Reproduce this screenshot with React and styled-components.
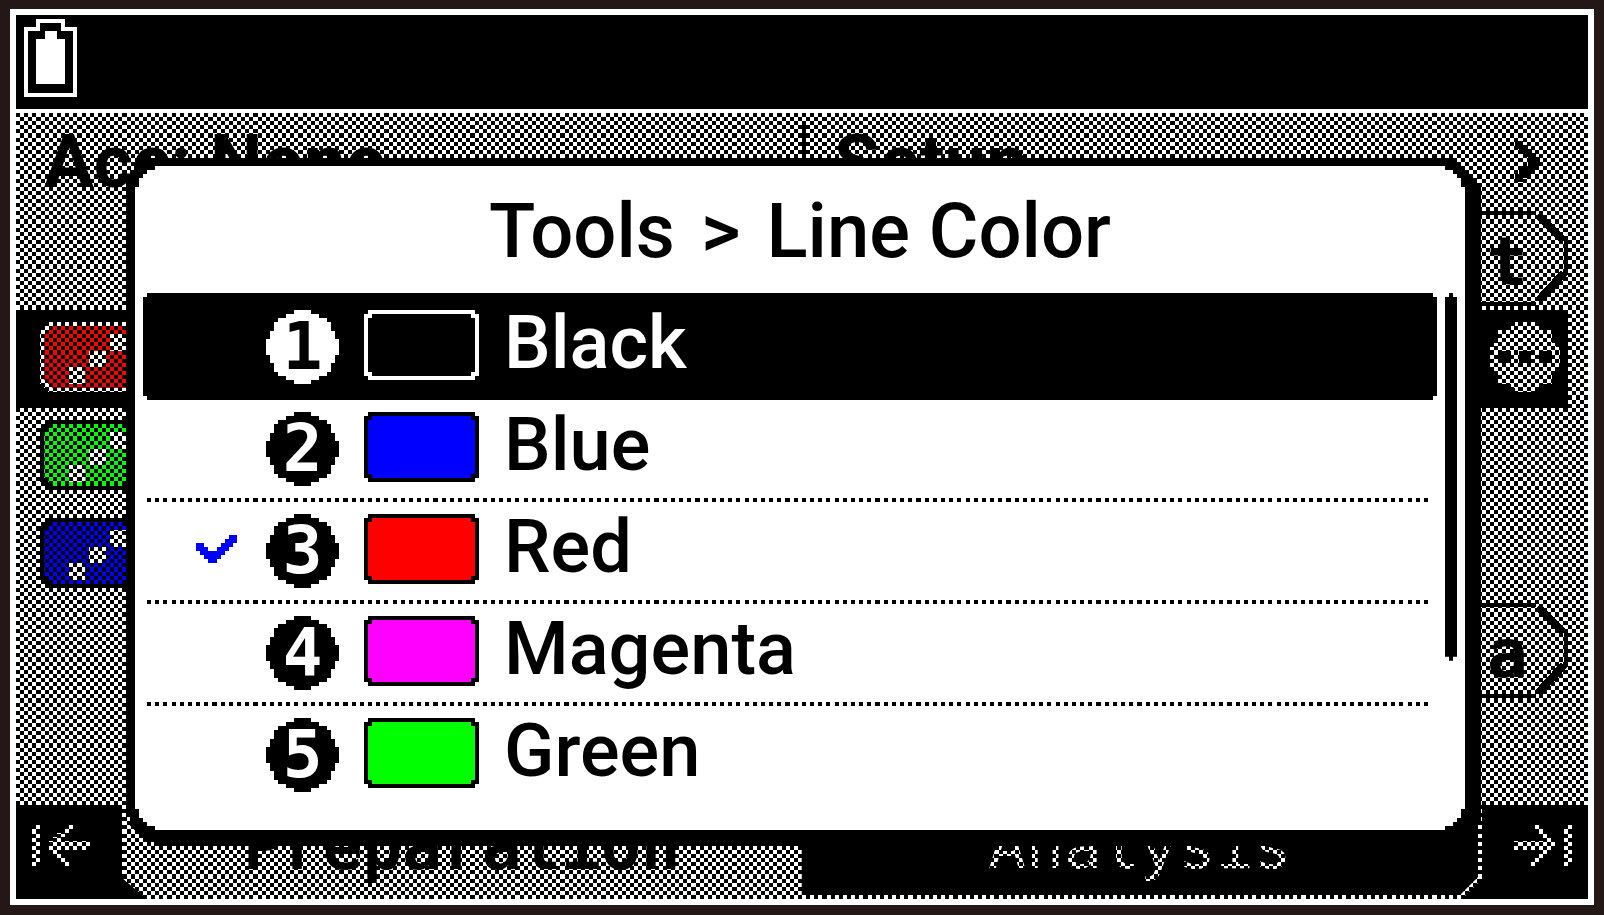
import React, { useState } from "react";
import styled, { createGlobalStyle } from "styled-components";

const GlobalStyle = createGlobalStyle`
  * { box-sizing: border-box; }
  body { margin: 0; background: #231815; }
  button { margin: 0; padding: 0; border: 0; background: none; color: inherit; font: inherit; text-align: left; cursor: pointer; }
  svg { display: block; shape-rendering: crispEdges; }
`;

/* Outline of a box whose corners are cut in square steps of one LCD pixel. */
const steppedCorners = (steps) => {
  const tl = steps.map(([x, y]) => `${x}px ${y}px`);
  const tr = [...steps].reverse().map(([x, y]) => `calc(100% - ${x}px) ${y}px`);
  const br = steps.map(([x, y]) => `calc(100% - ${x}px) calc(100% - ${y}px)`);
  const bl = [...steps].reverse().map(([x, y]) => `${x}px calc(100% - ${y}px)`);
  return `polygon(${[...tl, ...tr, ...br, ...bl].join(", ")})`;
};
const SMALL_NOTCH = steppedCorners([[0, 4], [4, 4], [4, 0]]);
const LARGE_NOTCH = steppedCorners([
  [0, 21], [4, 21], [4, 12], [8, 12], [8, 8], [12, 8], [12, 4], [20, 4], [20, 0],
]);

const Bezel = styled.main`
  min-height: 100vh;
  padding: 9px 10px 10px;
  background: #231815;
  color: #000;
  display: flex;
  font-family: Roboto, "Liberation Sans", sans-serif;
`;

const Screen = styled.div`
  flex: 1;
  min-width: 0;
  border: 6px solid #fff;
  display: flex;
  flex-direction: column;
`;

const StatusBar = styled.header`
  height: 98px;
  padding: 4px 8px;
  background: #000;
  border-bottom: 4px solid #fff;
`;

const Workspace = styled.div`
  flex: 1;
  display: grid;
  grid-template-columns: minmax(0, 1fr);
  position: relative;
  background: #fff;
`;

const Backdrop = styled.div`
  grid-area: 1 / 1;
  display: flex;
  flex-direction: column;
  font-family: "DejaVu Sans Mono", "Liberation Mono", monospace;
  font-size: 68px;
  font-weight: 700;
`;

const TopMenu = styled.nav`
  height: 99px;
  display: grid;
  grid-template-columns: 1fr 1fr;
  padding-top: 8px;
  font-family: Roboto, "Liberation Sans", sans-serif;
  font-size: 74px;
`;

const TopItem = styled.button`
  display: flex;
  align-items: center;
  justify-content: space-between;
  padding: 0 48px 10px 28px;
  line-height: 80px;
  border-left: ${(p) => (p.$divided ? "4px solid #000" : "0")};
`;

const ToolRow = styled.div`
  height: 98px;
  margin-right: 20px;
  padding: 0 0 4px 24px;
  display: flex;
  align-items: center;
  justify-content: space-between;
  background: ${(p) => (p.$active ? "#000" : "transparent")};
`;

const SwatchSvg = styled.svg`
  width: 115px;
  height: 70px;
`;

const RoundButton = styled.button`
  margin-right: 8px;
`;

const KeyHint = styled.button`
  width: 110px;
  height: 96px;
  margin-left: auto;
  padding: 6px 40px 0 0;
  position: relative;
  line-height: 90px;
  text-align: right;

  svg { position: absolute; inset: 0; }
`;

const Footer = styled.footer`
  height: 94px;
  margin-top: auto;
  display: flex;
  background: #000;
`;

const EndButton = styled.button`
  flex: none;
  width: 106px;
  display: flex;
  align-items: center;
  justify-content: ${(p) => (p.$end ? "flex-end" : "flex-start")};
  padding: 0 16px 13px;
`;

const Tab = styled.button`
  flex: 1 1 50%;
  padding: ${(p) => (p.$selected ? "0" : "0 4px 4px 0")};
  background: #fff;
  text-align: center;
  clip-path: ${(p) =>
    p.$selected
      ? "polygon(0 0, 100% 0, 100% 100%, 25px 100%, 0 73px)"
      : "polygon(0 0, 100% 0, 100% calc(100% - 20px), calc(100% - 20px) 100%, 0 100%)"};
`;

const TabLabel = styled.span`
  display: block;
  height: 100%;
  font-size: ${(p) => (p.$selected ? "66px" : "63px")};
  font-weight: ${(p) => (p.$selected ? 700 : 400)};
  line-height: 84px;
  background: ${(p) => (p.$selected ? "#fff" : "#000")};
  color: ${(p) => (p.$selected ? "#000" : "#fff")};
  clip-path: ${(p) =>
    p.$selected
      ? "none"
      : "polygon(0 0, 100% 0, 100% calc(100% - 18px), calc(100% - 18px) 100%, 0 100%)"};
`;

const DitherSvg = styled.svg`
  position: absolute;
  inset: 0;
  width: 100%;
  height: 100%;
  pointer-events: none;
`;

const DialogShadow = styled.div`
  grid-area: 1 / 1;
  align-self: start;
  position: relative;
  margin: 45px 115px 61px 110px;
  filter: drop-shadow(8px 8px 0 #000);
`;

const DialogFrame = styled.section`
  padding: 8px 8px 8px 9px;
  background: #000;
  clip-path: ${LARGE_NOTCH};
`;

const DialogBody = styled.div`
  padding-bottom: 22px;
  background: #fff;
  clip-path: ${LARGE_NOTCH};
`;

const Title = styled.h1`
  margin: 0;
  height: 127px;
  display: flex;
  justify-content: center;
  gap: 26px;
  font-size: 76px;
  font-weight: 500;
  line-height: 130px;
  white-space: nowrap;
`;

const ListArea = styled.div`
  display: grid;
  grid-template-columns: minmax(0, 1fr) 12px;
  gap: 8px;
  padding: 0 8px;
`;

const ColorRow = styled.button`
  display: flex;
  flex-direction: column;
  justify-content: flex-start;
  align-items: stretch;
  width: 100%;
  height: ${(p) => (p.$focused ? "107px" : "102px")};
  padding-top: ${(p) => (p.$focused ? "5px" : "0")};
  background: ${(p) => (p.$focused ? "#000" : "#fff")};
  color: ${(p) => (p.$focused ? "#fff" : "#000")};
  clip-path: ${(p) => (p.$focused ? SMALL_NOTCH : "none")};
`;

const RowGrid = styled.span`
  display: grid;
  grid-template-columns: 45px 73px 115px 1fr;
  column-gap: 25px;
  align-items: start;
  height: 98px;
  padding: 12px 0 0 53px;
`;

const CheckSlot = styled.span`
  padding-top: 21px;
`;

const Badge = styled.span`
  display: grid;
  height: 74px;

  > * { grid-area: 1 / 1; }
`;

const Digit = styled.span`
  color: ${(p) => (p.$focused ? "#000" : "#fff")};
  font: 700 66px/74px "DejaVu Sans Mono", "Liberation Mono", monospace;
  text-align: center;
`;

const ColorName = styled.span`
  font-size: 74px;
  font-weight: 500;
  line-height: 66px;
`;

const RuleSvg = styled.svg`
  width: calc(100% - 13px);
  height: 4px;
  margin-left: 4px;
`;

const Scrollbar = styled.div`
  background: #fff;
`;

const Thumb = styled.div`
  height: calc(100% * 5 / 7);
  background: #000;
  clip-path: ${SMALL_NOTCH};
`;

const Dither = () => (
  <DitherSvg viewBox="0 0 384 192" preserveAspectRatio="none" aria-hidden="true">
    <g stroke="#000" strokeWidth="1" strokeDasharray="1 1">
      {Array.from({ length: 192 }, (_, y) => (
        <line key={y} x1={y % 2} x2="384" y1={y + 0.5} y2={y + 0.5} />
      ))}
    </g>
  </DitherSvg>
);

const Battery = () => (
  <svg width="53" height="78" viewBox="0 0 53 78" fill="#fff" role="img" aria-label="Battery full">
    <path fillRule="evenodd" d="M12 0H41V8H53V78H0V8H12ZM16 4H37V12H49V74H4V12H16Z" />
    <path d="M21 12H33V20H41V65H12V20H21Z" />
  </svg>
);

const Swatch = ({ fill, line = "#000" }) => (
  <SwatchSvg viewBox="0 0 28 17" preserveAspectRatio="none" aria-hidden="true">
    <path fill={line} d="M1 0H27V1H28V16H27V17H1V16H0V1H1Z" />
    <path fill={fill} d="M2 1H26V2H27V15H26V16H2V15H1V2H2Z" />
  </SwatchSvg>
);

const SeriesSwatch = ({ fill, line = "#000" }) => (
  <SwatchSvg viewBox="0 0 28 17" preserveAspectRatio="none" aria-hidden="true">
    <path fill={line} d="M2 0H26V1H27V2H28V15H27V16H26V17H2V16H1V15H0V2H1V1H2Z" />
    <path fill={fill} d="M3 1H25V2H26V3H27V14H26V15H25V16H3V15H2V14H1V3H2V2H3Z" />
    <path fill="#fff" d="M7 11H11V15H7ZM12 7H16V11H12ZM17 3H21V7H17Z" />
  </SwatchSvg>
);

const Disc = ({ fill }) => (
  <svg width="73" height="74" viewBox="0 0 18 18" preserveAspectRatio="none" fill={fill} aria-hidden="true">
    <path d="M7 0H11V1H13V2H15V3H16V5H17V7H18V11H17V13H16V15H15V16H13V17H11V18H7V17H5V16H3V15H2V13H1V11H0V7H1V5H2V3H3V2H5V1H7Z" />
  </svg>
);

const Check = () => (
  <svg width="41" height="28" viewBox="0 0 10 7" preserveAspectRatio="none" fill="#00f" role="img" aria-label="Chosen">
    <path d="M8 0H10V2H9V3H8V4H7V5H6V6H5V7H3V6H2V5H1V4H0V2H2V3H3V4H5V3H6V2H7V1H8Z" />
  </svg>
);

const Chevron = () => (
  <svg width="25" height="41" viewBox="0 0 6 10" preserveAspectRatio="none" aria-hidden="true">
    <path d="M0 0H2V1H3V2H4V3H5V4H6V6H5V7H4V8H3V9H2V10H0V8H1V7H2V6H3V4H2V3H1V2H0Z" />
  </svg>
);

const KeyOutline = () => (
  <svg width="110" height="96" viewBox="0 0 110 96" fill="none" stroke="#000" aria-hidden="true">
    <path strokeWidth="4" d="M0 2H78M108 28V64M0 93H78" />
    <path strokeWidth="8" d="M80 4L106 30M106 62L80 90" />
  </svg>
);

const MoreIcon = () => (
  <svg width="70" height="70" viewBox="0 0 17 17" aria-hidden="true">
    <path
      fill="#fff"
      d="M6 0H11V1H12V2H15V5H16V6H17V11H16V12H15V15H12V16H11V17H6V16H5V15H2V12H1V11H0V6H1V5H2V2H5V1H6Z"
    />
    <path d="M2 7H5V10H2ZM7 7H10V10H7ZM12 7H15V10H12Z" />
  </svg>
);

const ToStart = () => (
  <svg width="58" height="41" viewBox="0 0 14 10" preserveAspectRatio="none" fill="#fff" aria-hidden="true">
    <path d="M0 0H2V10H0ZM8 0H10V1H9V2H8V3H7V4H14V6H7V7H8V8H9V9H10V10H8V9H7V8H6V7H5V6H4V4H5V3H6V2H7V1H8Z" />
  </svg>
);

const ToEnd = () => (
  <svg width="58" height="41" viewBox="0 0 14 10" preserveAspectRatio="none" fill="#fff" aria-hidden="true">
    <path d="M12 0H14V10H12ZM4 0H6V1H7V2H8V3H9V4H10V6H9V7H8V8H7V9H6V10H4V9H5V8H6V7H7V6H0V4H7V3H6V2H5V1H4Z" />
  </svg>
);

const DottedRule = () => (
  <RuleSvg viewBox="0 0 313 1" preserveAspectRatio="none" aria-hidden="true">
    <line x1="0" x2="313" y1="0.5" y2="0.5" stroke="#000" strokeDasharray="1 1" />
  </RuleSvg>
);

const COLORS = [
  { name: "Black", value: "#000" },
  { name: "Blue", value: "#00f" },
  { name: "Red", value: "#f00" },
  { name: "Magenta", value: "#f0f" },
  { name: "Green", value: "#0f0" },
];

export default function App() {
  const [focused, setFocused] = useState(0);
  const [chosen, setChosen] = useState(2);

  return (
    <Bezel>
      <GlobalStyle />
      <Screen>
        <StatusBar>
          <Battery />
        </StatusBar>
        <Workspace>
          <Backdrop>
            <TopMenu>
              <TopItem>Acc: None</TopItem>
              <TopItem $divided>
                Setup
                <Chevron />
              </TopItem>
            </TopMenu>
            <ToolRow>
              <KeyHint>
                <KeyOutline />t
              </KeyHint>
            </ToolRow>
            <ToolRow $active>
              <SeriesSwatch fill="#f00" line="#fff" />
              <RoundButton aria-label="More">
                <MoreIcon />
              </RoundButton>
            </ToolRow>
            <ToolRow>
              <SeriesSwatch fill="#0f0" />
            </ToolRow>
            <ToolRow>
              <SeriesSwatch fill="#00f" />
            </ToolRow>
            <ToolRow>
              <KeyHint>
                <KeyOutline />a
              </KeyHint>
            </ToolRow>
            <Footer>
              <EndButton aria-label="First tab">
                <ToStart />
              </EndButton>
              <Tab $selected>
                <TabLabel $selected>Preparation</TabLabel>
              </Tab>
              <Tab>
                <TabLabel>Analysis</TabLabel>
              </Tab>
              <EndButton $end aria-label="Last tab">
                <ToEnd />
              </EndButton>
            </Footer>
          </Backdrop>
          <Dither />
          <DialogShadow>
            <DialogFrame role="dialog" aria-labelledby="dialog-title">
              <DialogBody>
                <Title id="dialog-title">
                  <span>Tools</span>
                  <span>&gt;</span>
                  <span>Line Color</span>
                </Title>
                <ListArea>
                  <div role="menu" aria-labelledby="dialog-title">
                    {COLORS.map(({ name, value }, i) => {
                      const isFocused = i === focused;
                      const line = isFocused ? "#fff" : "#000";
                      return (
                        <ColorRow
                          key={name}
                          role="menuitemradio"
                          aria-checked={i === chosen}
                          $focused={isFocused}
                          onClick={() => {
                            setFocused(i);
                            setChosen(i);
                          }}
                        >
                          <RowGrid>
                            <CheckSlot>{i === chosen && <Check />}</CheckSlot>
                            <Badge>
                              <Disc fill={line} />
                              <Digit $focused={isFocused}>{i + 1}</Digit>
                            </Badge>
                            <Swatch fill={value} line={line} />
                            <ColorName>{name}</ColorName>
                          </RowGrid>
                          {!isFocused && i < COLORS.length - 1 && <DottedRule />}
                        </ColorRow>
                      );
                    })}
                  </div>
                  <Scrollbar>
                    <Thumb />
                  </Scrollbar>
                </ListArea>
              </DialogBody>
            </DialogFrame>
          </DialogShadow>
        </Workspace>
      </Screen>
    </Bezel>
  );
}
